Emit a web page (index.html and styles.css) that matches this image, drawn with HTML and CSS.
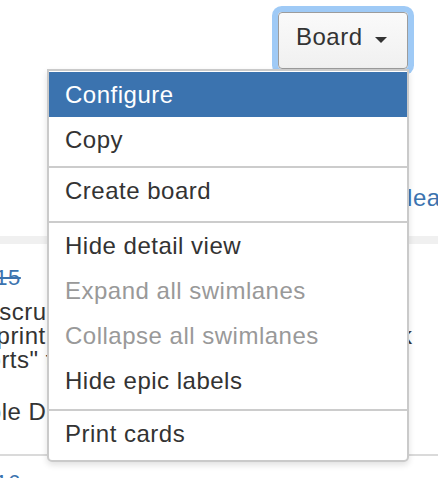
FILE: index.html
```html
<!DOCTYPE html>
<html lang="en">
<head>
<meta charset="utf-8">
<title>Board menu</title>
<link rel="stylesheet" href="styles.css">
</head>
<body>
<div class="page">
  <header class="toolbar">
    <div class="toolbar-top">
      <div class="dropdown">
        <button class="board-btn" type="button">Board<span class="caret"></span></button>
        <div class="menu" role="menu">
          <div class="menu-section s1">
            <a class="menu-item active">Configure</a>
            <a class="menu-item">Copy</a>
          </div>
          <div class="menu-section s2">
            <a class="menu-item">Create board</a>
          </div>
          <div class="menu-section s3">
            <a class="menu-item">Hide detail view</a>
            <a class="menu-item disabled">Expand all swimlanes</a>
            <a class="menu-item disabled">Collapse all swimlanes</a>
            <a class="menu-item">Hide epic labels</a>
          </div>
          <div class="menu-section s4">
            <a class="menu-item">Print cards</a>
          </div>
        </div>
      </div>
    </div>
    <div class="toolbar-links">
      <a class="link">Release</a>
    </div>
  </header>
  <div class="band"></div>
  <div class="column">
    <div class="card">
      <div class="card-key done">SSP-15</div>
      <div class="card-summary">
        <div class="line">As a scrum master, I can see progress of</div>
        <div class="line">the sprint via the Burndown Chart &gt;&gt; Click</div>
        <div class="line">Reports" tab</div>
      </div>
      <div class="card-epic">Sample Data</div>
    </div>
    <div class="card">
      <div class="card-key">SSP-16</div>
    </div>
  </div>
</div>
</body>
</html>
```
FILE: styles.css
```css
html, body {
  margin: 0;
  padding: 0;
  width: 438px;
  height: 478px;
  overflow: hidden;
  background: #fff;
}

body {
  font-family: "Liberation Sans", Arial, sans-serif;
  font-size: 24px;
  letter-spacing: 0.5px;
  color: #333;
}

.page {
  width: 438px;
}

.toolbar-top {
  display: flex;
  justify-content: flex-end;
  padding: 12px 30px 0 0;
}

.dropdown {
  position: relative;
}

.board-btn {
  display: flex;
  align-items: flex-start;
  box-sizing: border-box;
  width: 130px;
  height: 57px;
  padding: 4px 20px 0 17px;
  border: 1px solid #9c9c9c;
  border-radius: 4px;
  background: linear-gradient(#fafafa, #f0f0f0);
  box-shadow: 0 0 0 6px #9fcaf6;
  font: inherit;
  letter-spacing: inherit;
  line-height: 40px;
  color: #333;
}

.caret {
  width: 0;
  height: 0;
  margin: 20px 0 0 12px;
  border-left: 6px solid transparent;
  border-right: 6px solid transparent;
  border-top: 6px solid #333;
}

.menu {
  position: absolute;
  top: 100%;
  right: -1px;
  z-index: 10;
  box-sizing: border-box;
  width: 362px;
  background: #fff;
  border: 2px solid #cacaca;
  border-radius: 0 0 5px 5px;
  box-shadow: 0 3px 6px rgba(0, 0, 0, 0.12);
}

.menu-section + .menu-section {
  border-top: 2px solid #cccccc;
}

.s1 { padding: 1px 0 4px; }
.s2 { padding: 0 0 8px; }
.s3 { padding: 0 0 6px; }
.s4 { padding: 0 0 4px; }

.menu-item {
  display: block;
  height: 45px;
  line-height: 45px;
  padding: 0 16px;
  color: #333;
  white-space: nowrap;
}

.menu-item.active {
  background: #3b73af;
  color: #fff;
}

.menu-item.disabled {
  color: #999;
}

.toolbar-links {
  display: flex;
  justify-content: flex-end;
  margin-top: 115px;
}

.link {
  line-height: 28px;
  color: #3b73af;
  white-space: nowrap;
  margin-right: -29px;
}

.band {
  margin-top: 24px;
  height: 8px;
  background: #f0f0f0;
}

.column {
  padding-top: 7px;
  margin-left: -58px;
}

.card {
  padding: 15px 0 30px;
  border-bottom: 2px solid #dadada;
}

.card-key {
  font-size: 22px;
  line-height: 24px;
  color: #3b73af;
  white-space: nowrap;
}

.card-key.done {
  text-decoration: line-through;
}

.card-summary {
  margin-top: 10px;
}

.line {
  line-height: 24px;
  white-space: nowrap;
}

.card-epic {
  margin: 28px 0 0 -5px;
  line-height: 24px;
  white-space: nowrap;
}
```
